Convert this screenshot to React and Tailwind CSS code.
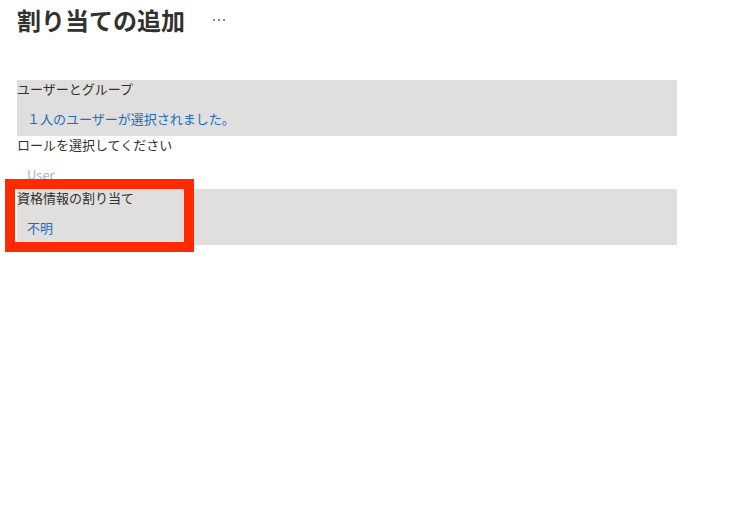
const Section = ({ label, value, valueClass, bg, height }) => (
  <div className={`${bg} ${height} flex flex-col`}>
    <div className="h-[18px] leading-[18px] text-[13px] text-[#323130]">{label}</div>
    <div className={`mt-[12px] h-[18px] leading-[18px] pl-[10px] text-[13px] ${valueClass}`}>{value}</div>
  </div>
);

const App = () => {
  return (
    <div
      className="relative w-[750px] h-[505px] bg-white"
      style={{ fontFamily: '"Noto Sans CJK JP", "Noto Sans", sans-serif' }}
    >
      {/* Header */}
      <div className="flex items-center pl-[17px] pt-[6px] h-[34px]">
        <h1 className="text-[24px] leading-[28px] font-bold text-[#323130]">割り当ての追加</h1>
        <span className="ml-[28px] flex gap-[3px] items-center">
          <span className="w-[2px] h-[2px] bg-[#8a8886]" />
          <span className="w-[2px] h-[2px] bg-[#8a8886]" />
          <span className="w-[2px] h-[2px] bg-[#8a8886]" />
        </span>
      </div>

      {/* Form */}
      <div className="mt-[46px] ml-[17px] w-[660px]">
        <Section
          label="ユーザーとグループ"
          value="１人のユーザーが選択されました。"
          valueClass="text-[#1a6dbf]"
          bg="bg-[#e0dfde]"
          height="h-[56px]"
        />
        <Section
          label="ロールを選択してください"
          value="User"
          valueClass="text-[#a3b5d2]"
          bg="bg-white"
          height="h-[53px]"
        />
        <Section
          label="資格情報の割り当て"
          value="不明"
          valueClass="text-[#1a6dbf]"
          bg="bg-[#e0dfde]"
          height="h-[56px]"
        />
      </div>

      {/* Highlight */}
      <div className="absolute left-[5px] top-[179px] w-[189px] h-[73px] border-[10px] border-[#ff2a00]" />
    </div>
  );
};

export default App;
